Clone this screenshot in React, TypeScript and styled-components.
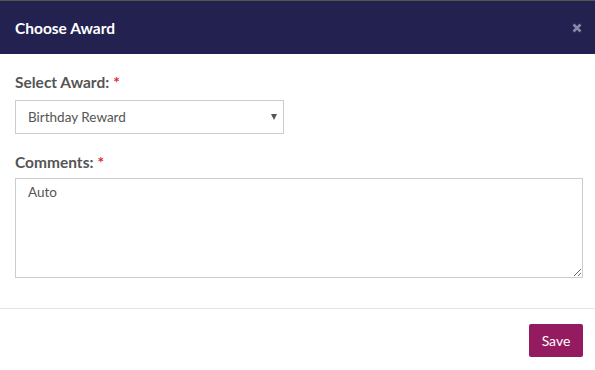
import React from "react";
import styled, { createGlobalStyle } from "styled-components";

const Global = createGlobalStyle`
  html, body {
    margin: 0;
    padding: 0;
    background: #fff;
  }
  body {
    font-family: "Lato", "Open Sans", sans-serif;
  }
`;

const Modal = styled.div`
  width: 595px;
  height: 370px;
  background: #fff;
  display: flex;
  flex-direction: column;
  border-top: 1px solid #55554f;
  box-sizing: border-box;
`;

const Header = styled.div`
  height: 53px;
  background: #232150;
  display: flex;
  align-items: center;
  justify-content: space-between;
  padding: 0 13px 0 15px;
`;

const Title = styled.h4`
  margin: 0;
  color: #fff;
  font-size: 15.5px;
  font-weight: 700;
  letter-spacing: 0;
`;

const Close = styled.button`
  border: none;
  background: none;
  padding: 0;
  width: 10px;
  height: 10px;
  display: flex;
  cursor: pointer;
`;

const Body = styled.div`
  padding: 19px 12px 30px 15px;
  display: flex;
  flex-direction: column;
`;

const Field = styled.div<{ gap?: number }>`
  display: flex;
  flex-direction: column;
  margin-bottom: ${(p) => p.gap ?? 0}px;
`;

const Label = styled.label<{ space?: number }>`
  color: #555;
  font-size: 15.5px;
  font-weight: 700;
  height: 18px;
  line-height: 18px;
  margin-bottom: ${(p) => p.space ?? 9}px;
`;

const Star = styled.span`
  color: #e0263c;
  margin-left: 4px;
`;

const SelectWrap = styled.div`
  position: relative;
  width: 269px;
`;

const Select = styled.select`
  appearance: none;
  width: 100%;
  height: 34px;
  border: 1px solid #ccc;
  border-radius: 0;
  background: #fff;
  padding: 0 12px;
  font-family: inherit;
  font-size: 13.5px;
  color: #555;
  box-sizing: border-box;
`;

const Caret = styled.span`
  position: absolute;
  right: 7px;
  top: 14px;
  width: 0;
  height: 0;
  border-left: 3.5px solid transparent;
  border-right: 3.5px solid transparent;
  border-top: 6px solid #555;
  pointer-events: none;
`;

const Textarea = styled.textarea`
  width: 568px;
  height: 100px;
  border: 1px solid #ccc;
  border-radius: 0;
  padding: 5px 12px;
  font-family: inherit;
  font-size: 13.5px;
  color: #555;
  box-sizing: border-box;
  resize: vertical;
  outline: none;
`;

const Footer = styled.div`
  border-top: 1px solid #e5e5e5;
  display: flex;
  justify-content: flex-end;
  padding: 15px 12px 0 15px;
`;

const SaveButton = styled.button`
  background: #951b60;
  color: #fff;
  border: none;
  border-radius: 2px;
  width: 54px;
  height: 33px;
  font-family: inherit;
  font-size: 14px;
  cursor: pointer;
`;

export default function App() {
  return (
    <>
      <Global />
      <Modal>
        <Header>
          <Title>Choose Award</Title>
          <Close aria-label="Close">
            <svg width="10" height="10" viewBox="0 0 10 10">
              <path d="M1.5 1.5 L8.5 8.5 M8.5 1.5 L1.5 8.5" stroke="#8a88a8" strokeWidth="2.6" strokeLinecap="butt" />
            </svg>
          </Close>
        </Header>
        <Body>
          <Field gap={19}>
            <Label>
              Select Award:<Star>*</Star>
            </Label>
            <SelectWrap>
              <Select defaultValue="birthday">
                <option value="birthday">Birthday Reward</option>
              </Select>
              <Caret />
            </SelectWrap>
          </Field>
          <Field>
            <Label space={7}>
              Comments:<Star>*</Star>
            </Label>
            <Textarea defaultValue="Auto" />
          </Field>
        </Body>
        <Footer>
          <SaveButton>Save</SaveButton>
        </Footer>
      </Modal>
    </>
  );
}
